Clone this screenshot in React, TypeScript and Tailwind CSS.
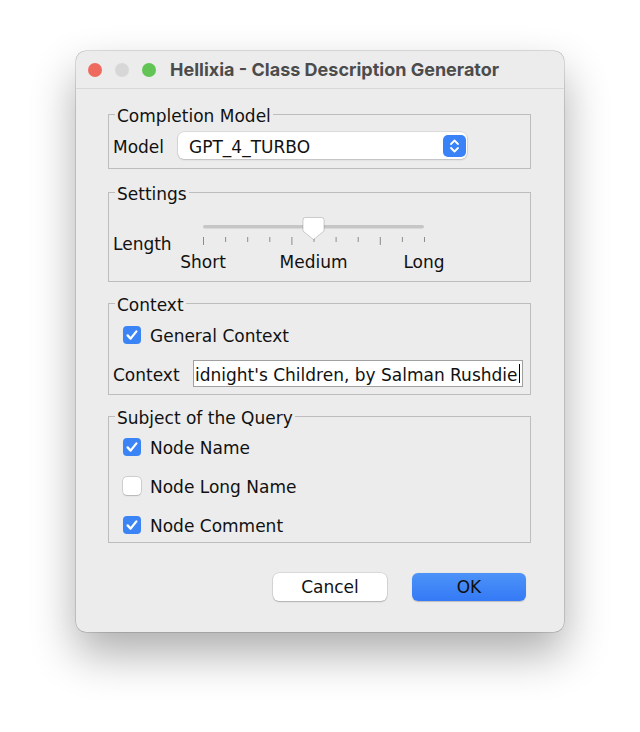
import React from 'react';

const body = "font-['DejaVu_Sans',sans-serif] text-[17px] leading-[20px] text-[#111]";

function Group({ title, className, children }: { title: string; className: string; children: React.ReactNode }) {
    return (
        <fieldset className={`ml-[32px] w-[423px] border border-[#bdbdbd] ${className}`}>
            <legend className="ml-[6px] px-[2px] pt-[4px] leading-[20px]">{title}</legend>
            {children}
        </fieldset>
    );
}

function Check({ checked, label }: { checked: boolean; label: string }) {
    return (
        <div className="flex h-[24px] items-center gap-[9px]">
            {checked ? (
                <span className="flex h-[18px] w-[18px] items-center justify-center rounded-[4px] bg-[#3b84f6]">
                    <svg viewBox="0 0 18 18" className="h-[18px] w-[18px]" aria-hidden="true">
                        <path d="M4.6 9.4 L7.6 12.6 L13.4 5.4" fill="none" stroke="#fff" strokeWidth="2.3" strokeLinecap="round" strokeLinejoin="round" />
                    </svg>
                </span>
            ) : (
                <span className="h-[18px] w-[18px] rounded-[4px] bg-white shadow-[0_0_0_0.5px_rgba(0,0,0,0.2),0_0.5px_1.5px_rgba(0,0,0,0.15)]" />
            )}
            <span className="mt-[2px]">{label}</span>
        </div>
    );
}

function LengthSlider() {
    // 11 ticks, track 221px wide, thumb sits on tick 5 (Medium)
    const ticks = Array.from({ length: 11 }, (_, i) => i);
    const x = (i: number) => 22 + i * 22.1;
    return (
        <div className="relative h-[62px] w-[264px]">
            <svg width="264" height="36" viewBox="0 0 264 36" aria-hidden="true">
                <rect x="22" y="15" width="221" height="3.5" rx="1.75" fill="#c6c6c6" />
                {ticks.map((i) => (
                    <line
                        key={i}
                        x1={x(i) + 0.5}
                        x2={x(i) + 0.5}
                        y1="27"
                        y2={i % 4 === 0 ? 35 : 32}
                        stroke="#8c8c8c"
                        strokeWidth="1"
                    />
                ))}
                <path
                    d="M124.5 7.5 h16 a2.5 2.5 0 0 1 2.5 2.5 v11 l-10.5 8.5 l-10.5 -8.5 v-11 a2.5 2.5 0 0 1 2.5 -2.5 z"
                    fill="#fff"
                    stroke="rgba(0,0,0,0.22)"
                    strokeWidth="0.8"
                />
            </svg>
            <span className="absolute top-[42px] left-[22px] -translate-x-1/2">Short</span>
            <span className="absolute top-[42px] left-[132.5px] -translate-x-1/2">Medium</span>
            <span className="absolute top-[42px] left-[243px] -translate-x-1/2">Long</span>
        </div>
    );
}

export default function App() {
    return (
        <div className="min-h-[732px] w-[640px] bg-white pt-[51px] pl-[76px]">
            <div className={`h-[581px] w-[488px] overflow-hidden rounded-[10px] bg-[#ececec] shadow-[0_0_0_0.5px_rgba(0,0,0,0.25),0_22px_45px_rgba(0,0,0,0.32)] ${body}`}>
                {/* title bar */}
                <div className="flex h-[38px] items-center border-b border-[#d8d8d8] pl-[12px]">
                    <div className="flex gap-[13px]">
                        <span className="h-[14px] w-[14px] rounded-full bg-[#ee6a5f]" />
                        <span className="h-[14px] w-[14px] rounded-full bg-[#d7d7d7]" />
                        <span className="h-[14px] w-[14px] rounded-full bg-[#61c454]" />
                    </div>
                    <span className="ml-[14px] font-['Inter',sans-serif] text-[18px] font-bold text-[#4c4c4c]">
                        Hellixia - Class Description Generator
                    </span>
                </div>

                <div className="pt-[13px]">
                    <Group title="Completion Model" className="h-[67px] pt-[6px]">
                        <div className="flex h-[27px] items-center pl-[4px]">
                            <span className="mt-[2px] w-[65px]">Model</span>
                            <div className="flex h-[27px] w-[289px] items-center justify-between rounded-[6px] bg-white pl-[11px] pr-[1px] shadow-[0_0_0_0.5px_rgba(0,0,0,0.14),0_1px_2px_rgba(0,0,0,0.14)]">
                                <span className="mt-[2px]">GPT_4_TURBO</span>
                                <span className="flex h-[22px] w-[23px] items-center justify-center rounded-[5px] bg-[#3a82f7]">
                                    <svg viewBox="0 0 23 22" className="h-[22px] w-[23px]" aria-hidden="true">
                                        <path d="M8 9 L11.5 5.5 L15 9 M8 13 L11.5 16.5 L15 13" fill="none" stroke="#fff" strokeWidth="1.8" strokeLinecap="round" strokeLinejoin="round" />
                                    </svg>
                                </span>
                            </div>
                        </div>
                    </Group>

                    <Group title="Settings" className="mt-[11px] h-[102px] pt-[6px]">
                        <div className="flex items-start pl-[4px]">
                            <span className="mt-[24px] w-[68px]">Length</span>
                            <LengthSlider />
                        </div>
                    </Group>

                    <Group title="Context" className="mt-[9px] h-[104px] pt-[8px]">
                        <div className="pl-[14px]">
                            <Check checked label="General Context" />
                        </div>
                        <div className="mt-[13px] flex h-[27px] items-center pl-[4px]">
                            <span className="mt-[2px] w-[80px]">Context</span>
                            <div className="flex h-[27px] w-[330px] items-center overflow-hidden border border-[#a0a0a0] bg-white pl-[1px] whitespace-nowrap">
                                <span className="mt-[2px]">idnight's Children, by Salman Rushdie</span>
                                <span className="ml-[1px] h-[19px] w-[1px] bg-black" />
                            </div>
                        </div>
                    </Group>

                    <Group title="Subject of the Query" className="mt-[9px] h-[139px] pt-[7px]">
                        <div className="flex flex-col gap-[15px] pl-[14px]">
                            <Check checked label="Node Name" />
                            <Check checked={false} label="Node Long Name" />
                            <Check checked label="Node Comment" />
                        </div>
                    </Group>

                    <div className="mt-[30px] flex justify-end gap-[25px] pr-[38px]">
                        <button type="button" className="h-[28px] w-[114px] rounded-[6px] bg-white shadow-[0_0_0_0.5px_rgba(0,0,0,0.15),0_1px_1.5px_rgba(0,0,0,0.2)]">
                            Cancel
                        </button>
                        <button type="button" className="h-[28px] w-[114px] rounded-[6px] bg-gradient-to-b from-[#4d93f8] to-[#3479f6] shadow-[0_0.5px_1px_rgba(0,0,0,0.2)]">
                            OK
                        </button>
                    </div>
                </div>
            </div>
        </div>
    );
}
